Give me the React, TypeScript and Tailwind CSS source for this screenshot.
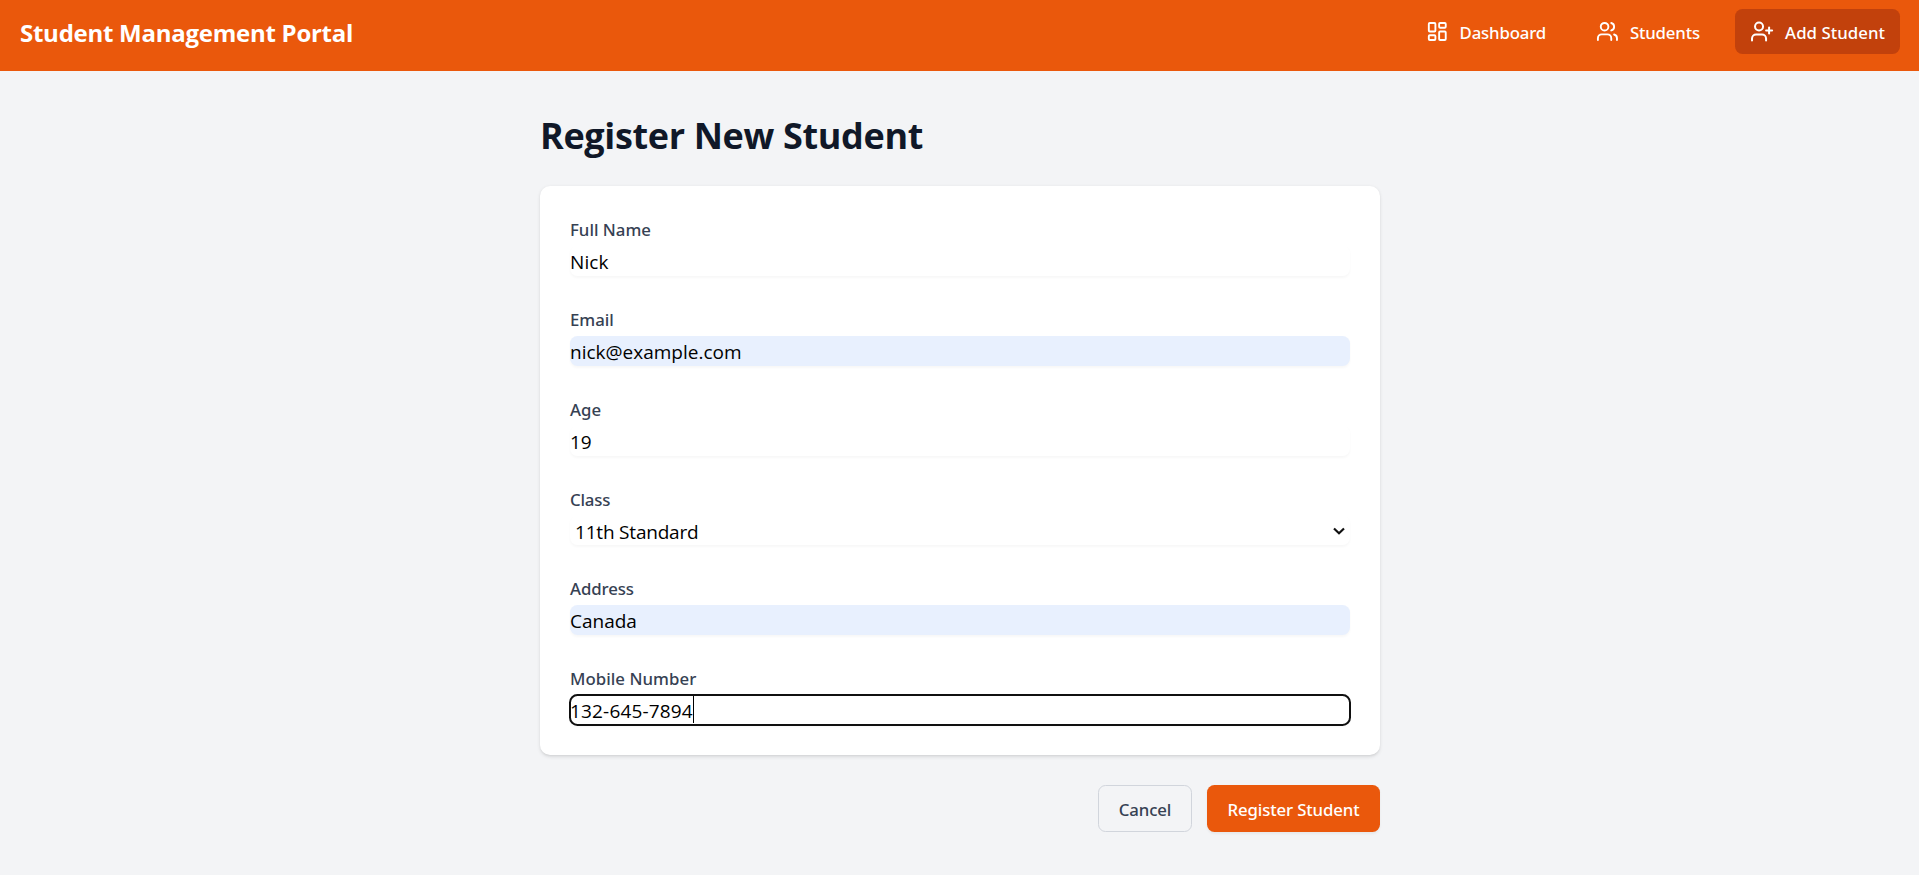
import React from "react";
import { LayoutDashboard, UserPlus, Users } from "lucide-react";

const labelClass = "block h-[25px] pt-px font-['Noto_Sans',sans-serif] text-[16.8px] leading-[25px] font-medium text-gray-700";
const inputClass =
  "mt-[5px] block h-[30px] w-full rounded-[7.5px] p-0 pt-[2px] text-[19px] leading-[28px] text-black shadow-[0_1.25px_2.5px_0_rgb(0_0_0/0.03)]";

function Field({
  label,
  value,
  labelSpacing = "",
  className = "",
}: {
  label: string;
  value: string;
  labelSpacing?: string;
  className?: string;
}) {
  return (
    <label className="block">
      <span className={`${labelClass} ${labelSpacing}`}>{label}</span>
      <input className={`${inputClass} ${className}`} defaultValue={value} />
    </label>
  );
}

function NavItem({ icon: Icon, label, className = "" }: { icon: typeof Users; label: string; className?: string }) {
  return (
    <a className={`flex h-[45px] items-center gap-[10px] rounded-[7.5px] px-[15px] ${className}`}>
      <Icon className="size-[25px]" strokeWidth={2} />
      <span className="pt-[2px] pl-px font-['Noto_Sans',sans-serif] text-[16.8px] leading-[25px] font-medium whitespace-nowrap">
        {label}
      </span>
    </a>
  );
}

export default function App() {
  return (
    <div className="min-h-[875px] bg-gray-100 font-['Open_Sans',sans-serif]">
      <header className="flex h-[71px] items-start justify-between bg-[#ea580c] pt-[9px] pr-[19px] pl-5 text-white">
        <h1 className="pt-[6px] text-[24px] leading-[35px] font-bold tracking-[-0.26px]">Student Management Portal</h1>
        <nav className="flex gap-5">
          <NavItem icon={LayoutDashboard} label="Dashboard" className="w-[150px] tracking-[-0.17px]" />
          <NavItem icon={Users} label="Students" className="w-[134px] tracking-[-0.15px]" />
          <NavItem icon={UserPlus} label="Add Student" className="w-[165px] bg-[#c2410c] tracking-[0.05px]" />
        </nav>
      </header>

      <main className="mx-auto w-[841px] pt-[42px] pl-px">
        <h2 className="h-[45px] text-[36px] leading-[45px] font-bold tracking-[-0.35px] text-gray-900">
          Register New Student
        </h2>

        <form className="mt-[28px]">
          <div className="flex h-[569px] flex-col gap-[30px] rounded-[10px] bg-white p-[30px] shadow-[0_1.25px_3.75px_0_rgb(0_0_0/0.1),0_1.25px_2.5px_-1.25px_rgb(0_0_0/0.1)]">
            <Field label="Full Name" value="Nick" className="tracking-[0.1px]" />
            <Field label="Email" value="nick@example.com" className="bg-[#e8f0fe]" />
            <Field label="Age" value="19" />
            <label className="block">
              <span className={`${labelClass} tracking-[-0.2px]`}>Class</span>
              <span className="mt-[5px] flex h-[29px] items-center justify-between rounded-[7.5px] pr-[5px] pl-[5px] text-[19px] leading-[25px] tracking-[-0.2px] text-black shadow-[0_1.25px_2.5px_0_rgb(0_0_0/0.03)]">
                <span className="pt-1">11th Standard</span>
                <svg className="h-[8px] w-[12px]" viewBox="0 0 12 8" fill="none" stroke="#101010" strokeWidth="2.2">
                  <path d="M1 1.5 6 6.2 11 1.5" />
                </svg>
              </span>
            </label>
            <Field label="Address" value="Canada" className="bg-[#e8f0fe]" labelSpacing="tracking-[-0.1px]" />
            <div className="relative">
              <Field
                label="Mobile Number"
                value="132-645-7894"
                labelSpacing="tracking-[0.05px]"
                className="tracking-[0.17px] outline-2 outline-offset-[-1px] outline-[#101010]"
              />
              <span className="absolute top-[31px] left-[123px] h-[27px] w-px bg-black" />
            </div>
          </div>

          <div className="mt-[30px] flex justify-end gap-[15px] font-['Noto_Sans',sans-serif] text-[16.8px] leading-[25px] font-medium">
            <button
              type="button"
              className="h-[47px] w-[94px] rounded-[7.5px] border border-gray-300 pt-[2px] tracking-[-0.1px] text-gray-700"
            >
              Cancel
            </button>
            <button
              type="button"
              className="h-[47px] w-[173px] rounded-[7.5px] bg-[#ea580c] pt-[2px] tracking-[-0.13px] text-white shadow-[0_1.25px_2.5px_0_rgb(0_0_0/0.05)]"
            >
              Register Student
            </button>
          </div>
        </form>
      </main>
    </div>
  );
}
